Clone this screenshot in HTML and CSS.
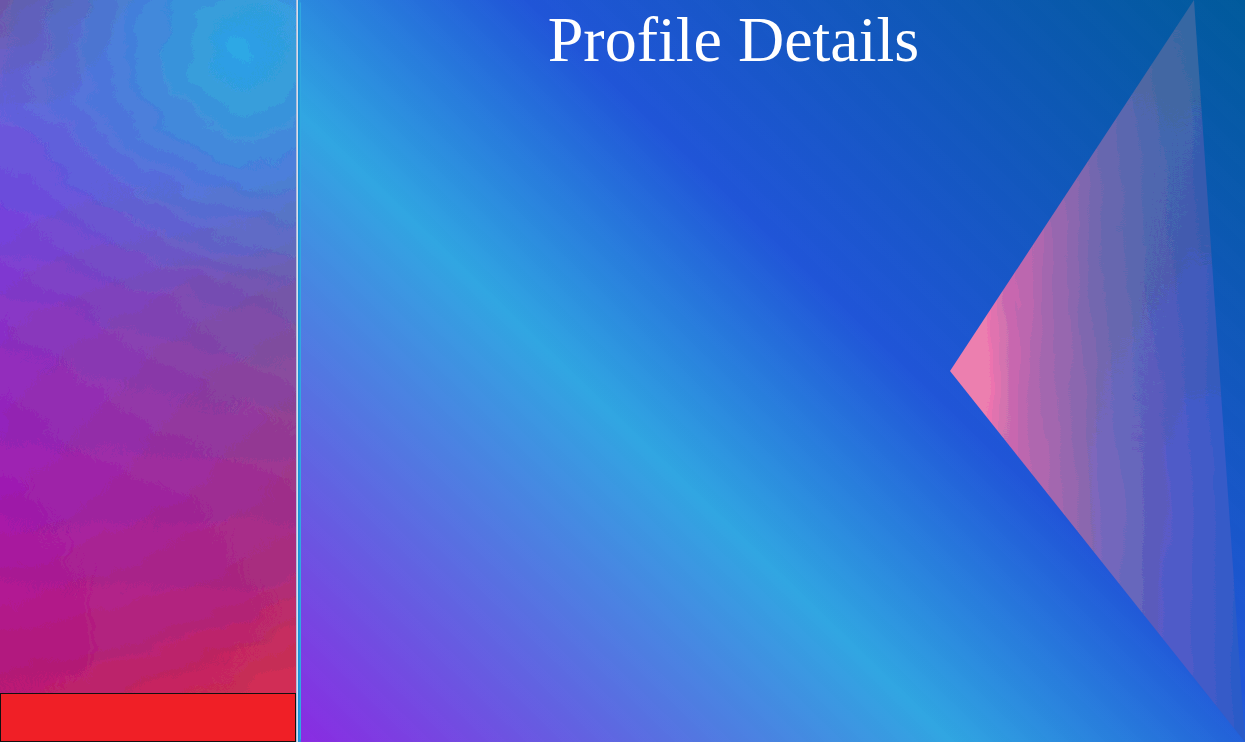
FILE: index.html
```html
<!DOCTYPE html>
<html lang="en">
<head>
<meta charset="utf-8">
<title>Profile Details</title>
<link rel="stylesheet" href="styles.css">
</head>
<body>
<svg class="defs" width="0" height="0" aria-hidden="true">
  <filter id="rough" x="0" y="0" width="100%" height="100%" color-interpolation-filters="sRGB">
    <feComponentTransfer result="steps">
      <feFuncR type="discrete" tableValues=".02 .06 .1 .14 .18 .22 .26 .3 .34 .38 .42 .46 .5 .54 .58 .62 .66 .7 .74 .78 .82 .86 .9 .94 .98"/>
      <feFuncG type="discrete" tableValues=".02 .06 .1 .14 .18 .22 .26 .3 .34 .38 .42 .46 .5 .54 .58 .62 .66 .7 .74 .78 .82 .86 .9 .94 .98"/>
      <feFuncB type="discrete" tableValues=".02 .06 .1 .14 .18 .22 .26 .3 .34 .38 .42 .46 .5 .54 .58 .62 .66 .7 .74 .78 .82 .86 .9 .94 .98"/>
    </feComponentTransfer>
    <feTurbulence type="fractalNoise" baseFrequency=".016 .03" numOctaves="5" seed="7" result="noise"/>
    <feDisplacementMap in="steps" in2="noise" scale="32" xChannelSelector="R" yChannelSelector="G"/>
  </filter>
  <filter id="streak" x="0" y="0" width="100%" height="100%" color-interpolation-filters="sRGB">
    <feComponentTransfer result="steps">
      <feFuncR type="discrete" tableValues=".024 .071 .119 .167 .214 .262 .31 .357 .405 .452 .5 .548 .595 .643 .69 .738 .786 .833 .881 .929 .976"/>
      <feFuncG type="discrete" tableValues=".024 .071 .119 .167 .214 .262 .31 .357 .405 .452 .5 .548 .595 .643 .69 .738 .786 .833 .881 .929 .976"/>
      <feFuncB type="discrete" tableValues=".024 .071 .119 .167 .214 .262 .31 .357 .405 .452 .5 .548 .595 .643 .69 .738 .786 .833 .881 .929 .976"/>
    </feComponentTransfer>
    <feTurbulence type="fractalNoise" baseFrequency=".035 .008" numOctaves="4" seed="3" result="noise"/>
    <feDisplacementMap in="steps" in2="noise" scale="20" xChannelSelector="R" yChannelSelector="G"/>
  </filter>
</svg>
<div class="app">
  <aside class="side">
    <div class="side-paint"></div>
    <div class="side-spacer"></div>
    <div class="side-foot"></div>
  </aside>
  <div class="rule"></div>
  <main class="main">
    <h1 class="title">Profile Details</h1>
    <div class="wedge"><div class="wedge-paint"></div></div>
  </main>
</div>
</body>
</html>
```
FILE: styles.css
```css
html, body {
  margin: 0;
  height: 100%;
  overflow: hidden;
}
.defs {
  position: absolute;
}
.app {
  display: flex;
  width: 1245px;
  height: 742px;
  background: #2a90dc;
}
.side {
  position: relative;
  flex: 0 0 296px;
  display: flex;
  flex-direction: column;
  overflow: hidden;
}
.side-paint {
  position: absolute;
  inset: -40px;
  filter: url(#rough);
  background: linear-gradient(180deg, #6a5aa8 40px, #6660d8 140px, #7048e0 240px, #8f2fc0 385px, #a01cb0 540px, #b01a90 640px, #b81a78 720px, #bc1a70 822px);
}
.side-paint::before {
  content: "";
  position: absolute;
  inset: 0;
  background: linear-gradient(180deg, #2a90dc 40px, #3a96d0 140px, #5a78c0 240px, #7555a8 340px, #80509e 385px, #a0308a 540px, #b02a78 640px, #b82a68 720px, #bc2a60 822px);
  -webkit-mask-image: linear-gradient(90deg, transparent 40px, #000 336px);
  mask-image: linear-gradient(90deg, transparent 40px, #000 336px);
}
.side-paint::after {
  content: "";
  position: absolute;
  inset: 0;
  background:
    radial-gradient(circle 240px at 282px 90px, #2fa6e2 0, rgba(50,160,226,.85) 45px, rgba(70,130,226,.65) 125px, rgba(80,110,225,.28) 185px, rgba(80,110,225,0) 100%),
    linear-gradient(155deg, rgba(207,42,82,0) 77%, #cf2a52 88%);
}
.side-spacer {
  flex: 1;
}
.side-foot {
  position: relative;
  height: 47px;
  background: #f01f26;
  border: 1px solid #111;
}
.rule {
  flex: 0 0 5px;
  background: linear-gradient(90deg, #aebbd8 0 1px, #d4e0f0 1px 2px, #1a90d8 2px 3px, #1f9ce0 3px 4px, #30a8e0 4px 5px);
  clip-path: polygon(0 0, 2px 0, 5px 3px, 5px 739px, 2px 742px, 0 742px);
}
.main {
  position: relative;
  flex: 1;
  min-width: 0;
  overflow: hidden;
  background:
    repeating-linear-gradient(44deg, rgba(255,255,255,.005) 0 13px, rgba(0,0,0,.005) 13px 26px),
    linear-gradient(44deg, #8a2be2 0, #30a6e2 38%, #2055d8 58%, #005a9c 100%);
}
.title {
  position: relative;
  margin: 0;
  padding: 1px 79px 0 0;
  font: 400 64px/78px "Liberation Serif", serif;
  color: #fff;
  text-align: center;
}
.wedge {
  position: absolute;
  left: 649px;
  top: 0;
  width: 295px;
  height: 742px;
  overflow: hidden;
  clip-path: polygon(0 371px, 244px 0, 295px 742px);
}
.wedge-paint {
  position: absolute;
  inset: -30px;
  filter: url(#streak);
  background: linear-gradient(90deg, #f07ab0 68px, #c86cb0 90px, #a86cb0 130px, #7a68b8 180px, #5c60c0 230px, #4a5cc8 270px, #2a55c8 325px);
}
.wedge-paint::after {
  content: "";
  position: absolute;
  inset: 0;
  background: linear-gradient(180deg, rgba(40,110,120,.5) 30px, rgba(40,110,120,0) 480px);
  -webkit-mask-image: linear-gradient(90deg, transparent 100px, #000 260px);
  mask-image: linear-gradient(90deg, transparent 100px, #000 260px);
}
```
